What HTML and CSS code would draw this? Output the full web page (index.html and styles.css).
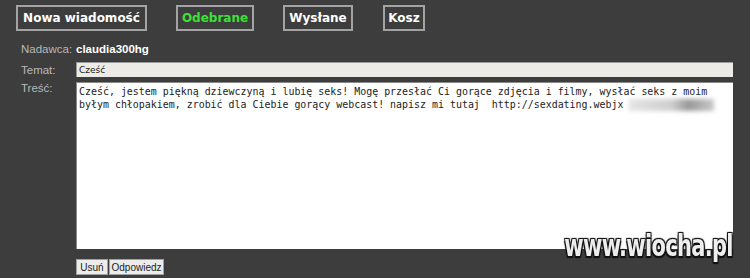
FILE: index.html
```html
<!DOCTYPE html>
<html lang="pl">
<head>
    <meta charset="UTF-8">
    <title>Poczta</title>
    <link rel="stylesheet" href="styles.css">
</head>
<body>
    <div id="page">
        <div class="tabs">
            <a class="tab tab-new">Nowa wiadomość</a>
            <a class="tab tab-inbox active">Odebrane</a>
            <a class="tab tab-sent">Wysłane</a>
            <a class="tab tab-trash">Kosz</a>
        </div>

        <div class="row row-sender">
            <div class="label">Nadawca:</div>
            <div class="sender">claudia300hg</div>
        </div>
        <div class="row row-subject">
            <div class="label">Temat:</div>
            <div class="subject">Cześć</div>
        </div>
        <div class="row row-body">
            <div class="label">Treść:</div>
            <div class="body-text">Cześć, jestem piękną dziewczyną i lubię seks! Mogę przesłać Ci gorące zdjęcia i filmy, wysłać seks z moim
byłym chłopakiem, zrobić dla Ciebie gorący webcast! napisz mi tutaj  http://sexdating.webjx<span class="blur"></span></div>
        </div>
        <div class="row row-actions">
            <div class="label"></div>
            <div class="actions">
                <button class="btn btn-delete">Usuń</button><button class="btn btn-reply">Odpowiedz</button>
            </div>
        </div>

        <div class="watermark">www.wiocha.pl</div>
    </div>
</body>
</html>
```

FILE: styles.css
```css
body {
    margin: 0;
    background: #3d3d3d;
    font-family: "DejaVu Sans", Verdana, sans-serif;
}

#page {
    position: relative;
    width: 750px;
    height: 278px;
    overflow: hidden;
}

/* zakladki */
.tabs {
    display: flex;
    gap: 29px;
    padding: 5px 0 0 16px;
    height: 26px;
}

.tab {
    display: flex;
    align-items: center;
    justify-content: center;
    box-sizing: border-box;
    height: 26px;
    border: 2px solid #a3a3a3;
    color: #ffffff;
    font-weight: bold;
    font-size: 12px;
}

.tab-new { width: 131px; }
.tab-inbox { width: 78px; }
.tab-sent { width: 70px; }
.tab-trash { width: 42px; margin-left: 1px; }

.tab.active {
    color: #3ee03a;
}

/* formularz */
.row {
    display: flex;
    margin-left: 21px;
}

.label {
    width: 55px;
    flex-shrink: 0;
    color: #b8b8b8;
    font-family: "Liberation Sans", Arial, sans-serif;
    font-size: 11.5px;
}

.row-sender {
    margin-top: 9px;
    height: 18px;
    align-items: center;
}

.row-subject {
    margin-top: 3px;
    height: 17px;
    align-items: center;
}

.row-body {
    margin-top: 4px;
}

.sender {
    color: #ffffff;
    font-family: "Liberation Sans", Arial, sans-serif;
    font-weight: bold;
    font-size: 11.5px;
}

.subject {
    box-sizing: border-box;
    width: 657px;
    height: 15px;
    padding: 1px 2px 0;
    background: #ecebe5;
    border-top: 1px solid #9a9a9a;
    border-left: 1px solid #9a9a9a;
    color: #222;
    font-size: 9px;
    line-height: 13px;
}

.body-text {
    box-sizing: border-box;
    width: 657px;
    height: 167px;
    padding: 2px 2px;
    background: #ffffff;
    border-top: 1px solid #8a8a8a;
    border-left: 1px solid #8a8a8a;
    color: #222;
    font-family: "DejaVu Sans Mono", monospace;
    font-size: 9.95px;
    line-height: 13px;
    white-space: pre;
    overflow: hidden;
}

.blur {
    display: inline-block;
    width: 85px;
    height: 12px;
    margin-left: 6px;
    vertical-align: -3px;
    background: linear-gradient(90deg, #e4e4e4, #cfcfcf 50%, #999 70%, #c9c9c9);
    filter: blur(2px);
}

.row-actions {
    margin-top: 10px;
}

.actions {
    display: flex;
}

.btn {
    box-sizing: border-box;
    height: 16px;
    padding: 0;
    background: #ececec;
    border: 1px solid #a0a0a0;
    color: #222;
    font-family: "Liberation Sans", Arial, sans-serif;
    font-size: 10px;
}

.btn-delete { width: 32px; }
.btn-reply { width: 55px; margin-left: 1px; }

/* znak wodny */
.watermark {
    position: absolute;
    right: 17px;
    top: 229px;
    transform: scaleX(0.7);
    transform-origin: right center;
    color: #eeeeee;
    font-family: "DejaVu Sans", sans-serif;
    font-weight: bold;
    font-size: 30px;
    line-height: 34px;
    letter-spacing: -1px;
    text-shadow: 0 0 2px #111, 1.5px 1.5px 1px #111, -1.5px -1.5px 1px #111, 1.5px -1.5px 1px #111, -1.5px 1.5px 1px #111;
}
```
